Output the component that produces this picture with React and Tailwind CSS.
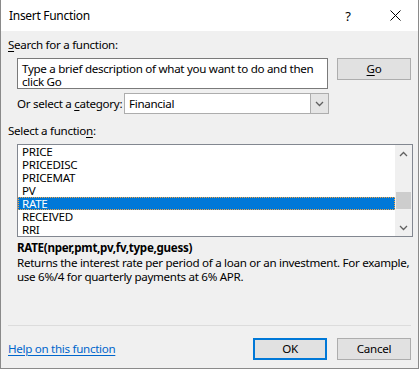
const FUNCTIONS = ['PRICE', 'PRICEDISC', 'PRICEMAT', 'PV', 'RATE', 'RECEIVED', 'RRI']
const SELECTED = 'RATE'

function Chevron({ up = false, className = '' }) {
  return (
    <svg width="9" height="6" viewBox="0 0 9 6" className={className}>
      <path
        d={up ? 'M1 5 L4.5 1.5 L8 5' : 'M1 1 L4.5 4.5 L8 1'}
        fill="none"
        stroke="#606060"
        strokeWidth="1.3"
      />
    </svg>
  )
}

function Button({ children, focused = false }) {
  return (
    <button
      className={`w-[74px] h-[22px] bg-[#e1e1e1] text-black flex items-center justify-center ${
        focused ? 'border-2 border-[#0078d7]' : 'border border-[#adadad]'
      }`}
    >
      {children}
    </button>
  )
}

export default function App() {
  return (
    <div
      className="w-[419px] h-[369px] bg-[#f0f0f0] border-x border-b border-[#8a8a8a] flex flex-col text-[11.6px] tracking-[-0.3px] text-black overflow-hidden"
      style={{ fontFamily: '"Noto Sans", "Open Sans", sans-serif' }}
    >
      {/* title bar */}
      <div className="h-[31px] bg-white flex items-center pl-[8px] shrink-0">
        <span className="flex-1 leading-[16px] text-[12px]">Insert Function</span>
        <span className="w-[12px] text-center mr-[36px] text-[13px] leading-[16px]">?</span>
        <svg width="11" height="11" viewBox="0 0 11 11" className="mr-[17px]">
          <path d="M0.5 0.5 L10.5 10.5 M10.5 0.5 L0.5 10.5" stroke="#000" strokeWidth="1" />
        </svg>
      </div>

      <div className="flex flex-col px-[7px]">
        <div className="mt-[6px] h-[16px] leading-[16px]">
          <u className="underline-offset-2">S</u>earch for a function:
        </div>

        <div className="mt-[5px] flex items-start">
          <div className="ml-[9px] w-[312px] h-[31px] bg-white border border-[#7a7a7a] pl-[4px] pt-[3px] leading-[13px] whitespace-nowrap">
            Type a brief description of what you want to do and then
            <br />
            click Go
          </div>
          <div className="ml-[9px]">
            <Button>
              <u className="underline-offset-2">G</u>o
            </Button>
          </div>
        </div>

        <div className="mt-[4px] h-[21px] flex items-center">
          <span className="ml-[9px] w-[107px] leading-[16px] whitespace-nowrap">
            Or select a <u className="underline-offset-2">c</u>ategory:
          </span>
          <div className="w-[205px] h-[21px] bg-white border border-[#adadad] flex">
            <span className="flex-1 pl-[4px] leading-[19px]">Financial</span>
            <div className="w-[18px] h-full bg-[#e5e5e5] border-l border-[#adadad] flex items-center justify-center">
              <Chevron />
            </div>
          </div>
        </div>

        <div className="mt-[9px] h-[16px] leading-[16px]">
          Select a functio<u className="underline-offset-2">n</u>:
        </div>

        <div className="mt-[5px] ml-[9px] w-[396px] h-[93px] bg-white border border-[#828790] flex">
          <div className="flex-1 flex flex-col">
            {FUNCTIONS.map((name) =>
              name === SELECTED ? (
                <div
                  key={name}
                  className="h-[13px] leading-[11px] pl-[3px] bg-[#0078d7] text-white border border-dotted border-[#f5a442]"
                >
                  {name}
                </div>
              ) : (
                <div key={name} className="h-[13px] leading-[13px] pl-[4px]">
                  {name}
                </div>
              )
            )}
          </div>
          <div className="w-[17px] bg-[#f0f0f0] flex flex-col">
            <div className="h-[17px] flex items-center justify-center">
              <Chevron up />
            </div>
            <div className="flex-1 px-[1px]">
              <div className="mt-[30px] h-[17px] bg-[#cdcdcd]" />
            </div>
            <div className="h-[17px] flex items-center justify-center">
              <Chevron />
            </div>
          </div>
        </div>

        <div className="mt-[3px] ml-[9px] h-[16px] leading-[16px] font-bold">
          RATE(nper,pmt,pv,fv,type,guess)
        </div>
        <div className="ml-[9px] leading-[14px] whitespace-nowrap">
          Returns the interest rate per period of a loan or an investment. For example,
          <br />
          use 6%/4 for quarterly payments at 6% APR.
        </div>
      </div>

      <div className="mt-auto mx-[7px] h-px bg-[#dcdcdc] shrink-0" />

      <div className="h-[42px] flex items-start px-[7px] shrink-0">
        <a href="#" className="mt-[12px] h-[22px] leading-[22px] text-[#0066cc] underline underline-offset-2 flex-1">
          Help on this function
        </a>
        <div className="mt-[12px] flex gap-[10px]">
          <Button focused>OK</Button>
          <Button>Cancel</Button>
        </div>
      </div>
    </div>
  )
}
